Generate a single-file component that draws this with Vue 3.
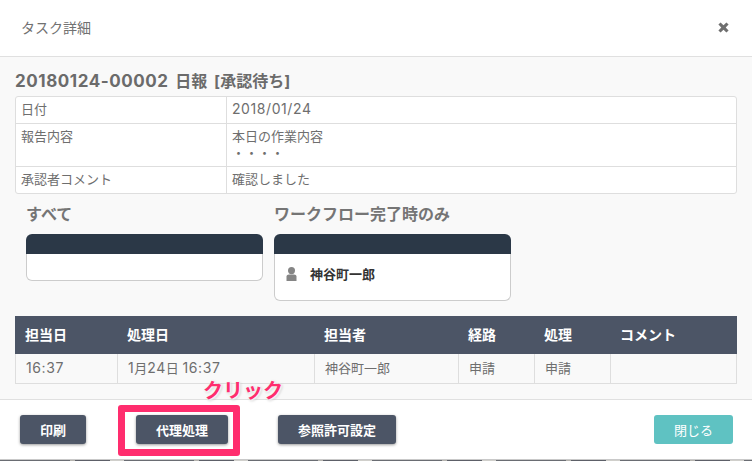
<script setup>
const info = [
  { label: '日付', lines: ['2018/01/24'] },
  { label: '報告内容', lines: ['本日の作業内容', '・・・・'] },
  { label: '承認者コメント', lines: ['確認しました'] }
]
const heads = ['担当日', '処理日', '担当者', '経路', '処理', 'コメント']
const cells = ['16:37', '1月24日 16:37', '神谷町一郎', '申請', '申請', '']

// Latin digits run a little larger than the kana and kanji around them.
const runs = (text) =>
  text.split(/([0-9:/-]+)/).filter(Boolean).map((t) => ({ t, num: /^[0-9:/-]+$/.test(t) }))
</script>

<template>
  <div class="modal">
    <header class="head">
      <span class="head-title">タスク詳細</span>
      <svg class="close" width="11" height="11" viewBox="0 0 11 11" aria-hidden="true">
        <path d="M2.6 0.4 5.5 3.3 8.4 0.4 10.6 2.6 7.7 5.5 10.6 8.4 8.4 10.6 5.5 7.7 2.6 10.6 0.4 8.4 3.3 5.5 0.4 2.6Z" fill="#6f6f6f" />
      </svg>
    </header>

    <main class="body">
      <h2 class="task-title"><span class="title-num">20180124-00002</span> 日報 [承認待ち]</h2>
      <div class="info">
        <div v-for="row in info" :key="row.label" class="info-row">
          <div class="info-label">{{ row.label }}</div>
          <div class="info-value">
            <div v-for="line in row.lines" :key="line">
              <span v-for="(r, i) in runs(line)" :key="i" :class="{ num: r.num }">{{ r.t }}</span>
            </div>
          </div>
        </div>
      </div>

      <div class="groups">
        <section class="group">
          <h3 class="group-title">すべて</h3>
          <div class="card">
            <div class="card-top"></div>
            <div class="card-body card-empty"></div>
          </div>
        </section>
        <section class="group">
          <h3 class="group-title">ワークフロー完了時のみ</h3>
          <div class="card">
            <div class="card-top"></div>
            <div class="card-body card-person">
              <svg width="11" height="14" viewBox="0 0 11 14" aria-hidden="true">
                <ellipse cx="5.5" cy="3.6" rx="3.5" ry="3.6" fill="#858585" />
                <path d="M0.5 14V9.6C0.5 8.4 1.6 7.6 3 7.6H8C9.4 7.6 10.5 8.4 10.5 9.6V14Z" fill="#858585" />
              </svg>
              <span class="person-name">神谷町一郎</span>
            </div>
          </div>
        </section>
      </div>

      <div class="log">
        <div class="log-head">
          <div v-for="h in heads" :key="h" class="log-th">{{ h }}</div>
        </div>
        <div class="log-row">
          <div v-for="(c, i) in cells" :key="i" class="log-td">
            <span v-for="(r, j) in runs(c)" :key="j" :class="{ num: r.num }">{{ r.t }}</span>
          </div>
        </div>
      </div>
    </main>

    <footer class="foot">
      <button class="btn b-print">印刷</button>
      <button class="btn b-proxy">代理処理</button>
      <button class="btn b-perm">参照許可設定</button>
      <button class="btn b-close">閉じる</button>
      <div class="highlight"></div>
      <div class="click-note">クリック</div>
    </footer>
    <div class="backdrop"></div>
  </div>
</template>

<style scoped>
.modal {
  width: 752px;
  height: 461px;
  position: relative;
  overflow: hidden;
  display: flex;
  flex-direction: column;
  background: #fff;
  color: #6e6e6e;
  font-family: Inter, "Noto Sans CJK JP", sans-serif;
  font-size: 13px;
}
.num {
  font-size: 14px;
  line-height: 1;
  letter-spacing: 0.58px;
}
.head {
  height: 54px;
  flex: none;
  box-sizing: content-box;
  border-bottom: 1px solid #e0e0e0;
  display: flex;
  align-items: center;
  justify-content: space-between;
  padding: 0 23px 2px 21px;
}
.head-title {
  font-size: 14px;
  color: #717171;
}
.close {
  display: block;
}
.body {
  height: 342px;
  flex: none;
  background: #f9f9f9;
  padding: 15px 15px 0;
  box-sizing: border-box;
}
.task-title {
  margin: 0;
  height: 24px;
  line-height: 18px;
  font-size: 16px;
  font-weight: 700;
  color: #6b6b6b;
  word-spacing: 3px;
}
.title-num {
  font-size: 17px;
  line-height: 1;
  letter-spacing: 0.55px;
}
.info {
  width: 722px;
  box-sizing: border-box;
  background: #fff;
  border: 1px solid #dedede;
  border-radius: 3px;
}
.info-row {
  display: flex;
  border-bottom: 1px solid #dedede;
}
.info-row:last-child {
  border-bottom: 0;
}
.info-row:nth-child(2) .info-value {
  padding-bottom: 4px;
}
.info-label {
  width: 205px;
  flex: none;
  padding: 4px 0 5px 5px;
  border-right: 1px solid #dedede;
  line-height: 17px;
}
.info-value {
  padding: 4px 0 5px 5px;
  line-height: 17px;
}
.groups {
  display: flex;
  gap: 11px;
  margin-top: 10px;
  padding-left: 11px;
  align-items: flex-start;
}
.group {
  width: 237px;
}
.group-title {
  margin: 0 0 10px 0;
  height: 20px;
  line-height: 20px;
  font-size: 16px;
  font-weight: 700;
  color: #757575;
}
.card-top {
  height: 20px;
  background: #2b3847;
  border-radius: 6px 6px 0 0;
}
.card-body {
  box-sizing: border-box;
  background: #fff;
  border: 1px solid #cccccc;
  border-top: 0;
  border-radius: 0 0 6px 6px;
}
.card-empty {
  height: 27px;
}
.card-person {
  height: 47px;
  display: flex;
  align-items: flex-start;
  padding: 13px 0 0 11px;
  gap: 13px;
}
.person-name {
  font-size: 13px;
  font-weight: 700;
  color: #333;
  line-height: 14px;
}
.log {
  margin-top: 15px;
  width: 722px;
}
.log-head,
.log-row {
  display: grid;
  grid-template-columns: 102px 197px 144px 76px 76px 127px;
}
.log-head {
  height: 38px;
  background: #4c5566;
}
.log-th {
  padding-left: 10px;
  line-height: 38px;
  color: #fff;
  font-weight: 700;
  font-size: 14px;
}
.log-row {
  height: 30px;
  border-bottom: 1px solid #dedede;
  box-sizing: border-box;
  border-left: 1px solid #dedede;
  border-right: 1px solid #dedede;
}
.log-td {
  padding-left: 10px;
  line-height: 28px;
  border-right: 1px solid #dedede;
}
.log-td:last-child {
  border-right: 0;
}
.foot {
  position: relative;
  flex: 1;
  border-top: 1px solid #e0e0e0;
  display: flex;
  align-items: flex-start;
  padding: 15px 19px 0 20px;
  box-sizing: border-box;
}
.btn {
  height: 29px;
  padding: 0;
  border: 0;
  border-radius: 3px;
  background: #4c5566;
  color: #fff;
  font-family: inherit;
  font-size: 13px;
  font-weight: 700;
  box-shadow: 0 1px 3px rgba(0, 0, 0, 0.4);
}
.b-print {
  width: 66px;
}
.b-proxy {
  width: 92px;
  margin-left: 50px;
}
.b-perm {
  width: 118px;
  margin-left: 50px;
}
.b-close {
  width: 79px;
  margin-left: auto;
  background: #5fc2c2;
  box-shadow: none;
  font-weight: 400;
}
.highlight {
  position: absolute;
  left: 118px;
  top: 5px;
  width: 122px;
  height: 51px;
  box-sizing: border-box;
  border: 7px solid #ff2d6e;
  border-radius: 3px;
}
.click-note {
  position: absolute;
  left: 203px;
  top: -21px;
  font-size: 20px;
  line-height: 24px;
  font-weight: 700;
  color: #ff2d6e;
  text-shadow: 0 0 3px #fff, 1px 1px 2px #fff, 1px 1px 3px rgba(0, 0, 0, 0.35);
}
.backdrop {
  position: absolute;
  left: 0;
  right: 0;
  bottom: 0;
  height: 1px;
  border-top: 1px solid #c9c9c9;
  background: repeating-linear-gradient(90deg, #6a6d73 0 70px, #b5b3ae 70px 75px, #5d6068 75px 110px, #d0cfcb 110px 124px);
}
</style>
